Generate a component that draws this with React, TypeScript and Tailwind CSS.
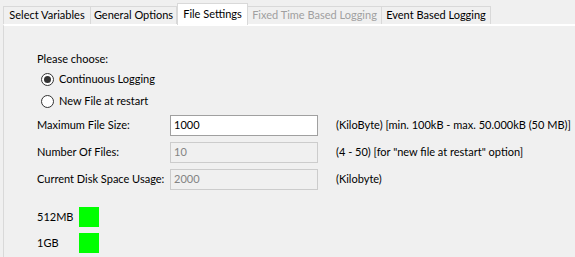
import React from "react";

const tabs = [
  { label: "Select Variables", w: "w-[88px]" },
  { label: "General Options", w: "w-[86px]" },
  { label: "File Settings", w: "w-[71px]", active: true },
  { label: "Fixed Time Based Logging", w: "w-[134px]", disabled: true },
  { label: "Event Based Logging", w: "w-[109px]" },
];

function Radio({ checked, label }: { checked?: boolean; label: string }) {
  return (
    <div className="flex items-center h-[22px]">
      <span className="w-[13px] h-[13px] rounded-full border border-[#333] bg-white flex items-center justify-center ml-[4px] mr-[5px]">
        {checked && <span className="w-[7px] h-[7px] rounded-full bg-[#333]" />}
      </span>
      <span>{label}</span>
    </div>
  );
}

function Field({
  label,
  value,
  hint,
  disabled,
}: {
  label: string;
  value: string;
  hint: string;
  disabled?: boolean;
}) {
  return (
    <>
      <span>{label}</span>
      <div
        className={
          "h-[21px] flex items-center px-[3px] border " +
          (disabled
            ? "bg-[#f0f0f0] border-[#cccccc] text-[#838383]"
            : "bg-white border-[#a0a0a0]")
        }
      >
        {value}
      </div>
      <span className="ml-[18px]">{hint}</span>
    </>
  );
}

export default function App() {
  return (
    <div
      className="w-[575px] h-[257px] bg-[#f0f0f0] text-[11px] text-black overflow-hidden whitespace-nowrap"
      style={{ fontFamily: "Lato, 'Liberation Sans', sans-serif" }}
    >
      {/* Tab strip */}
      <div className="flex items-end h-[24px] pl-[3px]">
        {tabs.map((t) =>
          t.active ? (
            <div
              key={t.label}
              className={`${t.w} h-[22px] -mb-[1px] z-10 bg-white border border-b-0 border-[#d9d9d9] flex items-center justify-center`}
            >
              {t.label}
            </div>
          ) : (
            <div
              key={t.label}
              className={`${t.w} h-[18px] border border-l-0 first:border-l border-b-0 border-[#d9d9d9] flex items-center justify-center ${
                t.disabled ? "text-[#a0a0a0]" : ""
              }`}
            >
              {t.label}
            </div>
          )
        )}
      </div>

      {/* Panel */}
      <div className="ml-[3px] h-[233px] border-t-2 border-l border-t-white border-l-[#d9d9d9] pl-[33px] pt-[24px]">
        <div className="h-[18px] leading-[18px]">Please choose:</div>
        <Radio checked label="Continuous Logging" />
        <Radio label="New File at restart" />

        <div className="grid grid-cols-[133px_148px_auto] gap-y-[6px] items-center mt-[3px]">
          <Field
            label="Maximum File Size:"
            value="1000"
            hint="(KiloByte) [min. 100kB - max. 50.000kB (50 MB)]"
          />
          <Field
            label="Number Of Files:"
            value="10"
            hint={'(4 - 50) [for "new file at restart" option]'}
            disabled
          />
          <Field
            label="Current Disk Space Usage:"
            value="2000"
            hint="(Kilobyte)"
            disabled
          />
        </div>

        <div className="mt-[17px] flex flex-col gap-[6px]">
          <div className="flex items-center">
            <span className="w-[42px]">512MB</span>
            <span className="w-[20px] h-[20px] bg-[#00ff00]" />
          </div>
          <div className="flex items-center">
            <span className="w-[42px]">1GB</span>
            <span className="w-[20px] h-[20px] bg-[#00ff00]" />
          </div>
        </div>
      </div>
    </div>
  );
}
